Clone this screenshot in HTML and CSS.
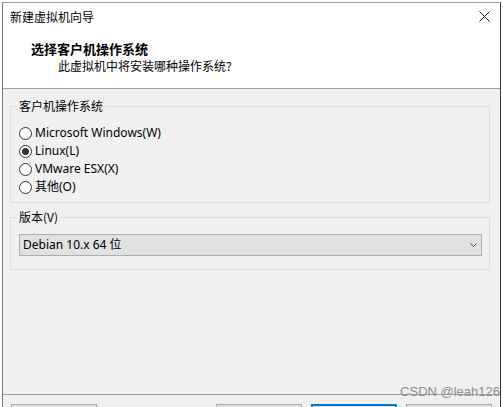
FILE: index.html
```html
<!DOCTYPE html>
<html lang="zh-CN">
<head>
<meta charset="utf-8">
<title>新建虚拟机向导</title>
<link rel="stylesheet" href="styles.css">
</head>
<body>
<div class="window">
  <div class="titlebar">
    <span class="title">新建虚拟机向导</span>
    <svg class="close" width="11" height="11" viewBox="0 0 11 11"><path d="M0.5 0.5 L10.5 10.5 M10.5 0.5 L0.5 10.5" stroke="#111" stroke-width="1" fill="none"/></svg>
  </div>
  <div class="header">
    <div class="heading">选择客户机操作系统</div>
    <div class="subheading">此虚拟机中将安装哪种操作系统?</div>
  </div>
  <div class="content">
    <fieldset class="group group-os">
      <legend>客户机操作系统</legend>
      <div class="radio-row"><span class="radio"></span><span class="label">Microsoft Windows(W)</span></div>
      <div class="radio-row"><span class="radio checked"></span><span class="label">Linux(L)</span></div>
      <div class="radio-row"><span class="radio"></span><span class="label">VMware ESX(X)</span></div>
      <div class="radio-row"><span class="radio"></span><span class="label">其他(O)</span></div>
    </fieldset>
    <fieldset class="group group-ver">
      <legend>版本(V)</legend>
      <div class="select">
        <span class="select-text">Debian 10.x 64 位</span>
        <svg class="chevron" width="7" height="4" viewBox="0 0 7 4"><path d="M0.5 0.5 L3.5 3.5 L6.5 0.5" stroke="#444" stroke-width="1" fill="none"/></svg>
      </div>
    </fieldset>
  </div>
  <div class="footer">
    <div class="btn" aria-label="帮助"></div>
    <div class="btn-group">
      <div class="btn" aria-label="上一步(B)"></div>
      <div class="btn primary" aria-label="下一步(N)"></div>
      <div class="btn" aria-label="取消"></div>
    </div>
    <span class="watermark">CSDN @leah126</span>
  </div>
</div>
</body>
</html>
```
FILE: styles.css
```css
html, body {
  margin: 0;
  padding: 0;
  background: #ffffff;
  overflow: hidden;
}
body {
  font-family: "Noto Sans", "Noto Sans CJK SC", sans-serif;
  font-size: 12px;
  color: #000;
}
.window {
  margin: 2px 0 0 2px;
  width: 497px;
  height: 404px;
  border-top: 1px solid #9a9a9a;
  border-left: 1px solid #7a7a7a;
  border-right: 1px solid #3a3a3a;
  background: #ffffff;
  display: flex;
  flex-direction: column;
  overflow: hidden;
}
.window > * {
  flex: none;
}
.titlebar {
  height: 28px;
  display: flex;
  align-items: center;
  justify-content: space-between;
  padding: 0 10px 0 7px;
}
.title {
  font-family: "Noto Sans CJK SC", sans-serif;
  font-size: 12px;
  line-height: 28px;
}
.close {
  display: block;
  margin-top: -1px;
}
.header {
  height: 58px;
  box-sizing: border-box;
  padding-top: 11px;
  border-bottom: 1px solid #a0a0a0;
}
.heading {
  font-family: "Noto Sans CJK SC", sans-serif;
  font-weight: bold;
  font-size: 13px;
  line-height: 14px;
  padding-left: 28px;
}
.subheading {
  font-family: "Noto Sans CJK SC", sans-serif;
  font-size: 12px;
  line-height: 16px;
  margin-top: 2px;
  padding-left: 55px;
}
.content {
  background: #f0f0f0;
  height: 305px;
  box-sizing: border-box;
  padding: 9px 10px 0 7px;
}
.group {
  margin: 0;
  border: 1px solid #dcdcdc;
  padding: 0 6px;
  min-width: 0;
}
.group legend {
  padding: 0 2px;
  line-height: 16px;
  font-family: "Noto Sans CJK SC", sans-serif;
  font-size: 12px;
  color: #000;
}
.group-os {
  padding-top: 10px;
  padding-bottom: 6px;
}
.radio-row {
  height: 18px;
  display: flex;
  align-items: center;
  margin-left: 2px;
}
.radio {
  width: 11px;
  height: 11px;
  border: 1px solid #333;
  border-radius: 50%;
  background: #fff;
  position: relative;
  margin-right: 3px;
  flex: none;
}
.radio.checked::after {
  content: "";
  position: absolute;
  left: 2px;
  top: 2px;
  width: 7px;
  height: 7px;
  border-radius: 50%;
  background: #333;
}
.label {
  line-height: 18px;
}
.group-ver {
  margin-top: 6px;
  padding-top: 9px;
  padding-bottom: 13px;
}
.select {
  margin: 0 1px 0 2px;
  height: 22px;
  box-sizing: border-box;
  border: 1px solid #adadad;
  background: #e1e1e1;
  display: flex;
  align-items: center;
  justify-content: space-between;
  padding: 0 4px 0 3px;
}
.select-text {
  line-height: 20px;
}
.footer {
  position: relative;
  flex: 1 1 auto !important;
  min-height: 0;
  background: #f0f0f0;
  border-top: 1px solid #a0a0a0;
  display: flex;
  justify-content: space-between;
  align-items: flex-start;
  padding: 9px 8px 0 8px;
  overflow: visible;
}
.btn-group {
  display: flex;
  gap: 9px;
}
.btn {
  width: 86px;
  height: 3px;
  box-sizing: border-box;
  border: 1px solid #adadad;
  border-bottom: 0;
  background: #e1e1e1;
}
.btn.primary {
  border: 2px solid #0078d7;
  border-bottom: 0;
}
.watermark {
  position: absolute;
  right: 0;
  top: -11px;
  font-family: "Liberation Sans", sans-serif;
  font-size: 13px;
  line-height: 16px;
  color: #8c8c8c;
}
```
